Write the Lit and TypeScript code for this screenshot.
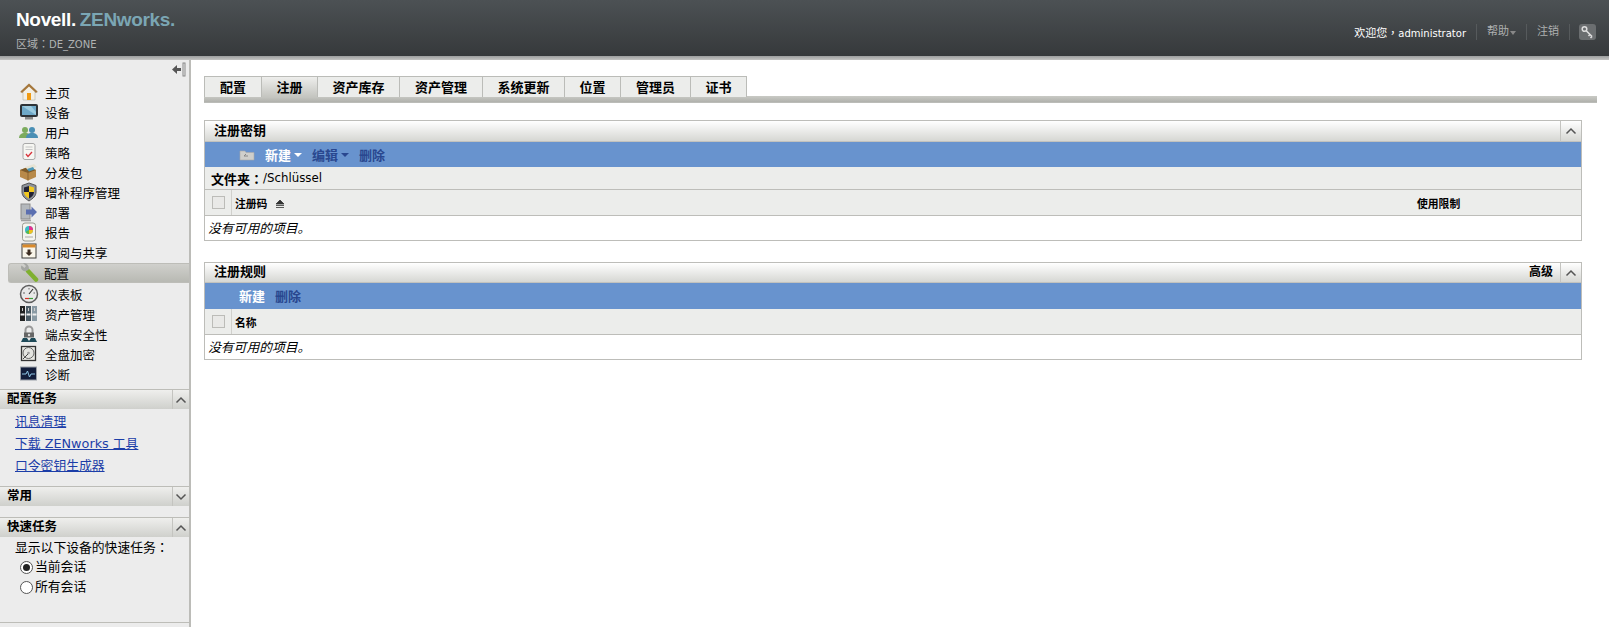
import { LitElement, html, css, svg } from "lit";
import { customElement } from "lit/decorators.js";

const icons: Record<string, unknown> = {
  home: svg`<path d="M10 2 1.500 10h2.500v8h12v-8h2.500z" fill="#f3efe4" stroke="#b7b3a6" stroke-width=".6"/><path d="M10 1.500 1.500 9.500 3 11l7-6.500 7 6.500 1.500-1.500z" fill="#a5763b"/><rect x="8" y="11" width="4" height="7" fill="#f09a12"/>`,
  device: svg`<rect x="1" y="2" width="18" height="13" rx="2" fill="#2e3338"/><rect x="3" y="4" width="14" height="9" fill="#6fa9c9"/><path d="M3 4h9l5 6v3z" fill="#9ccbe0"/><rect x="6" y="15" width="8" height="2.500" fill="#8a8a8a"/>`,
  user: svg`<circle cx="6" cy="8" r="3" fill="#7cab5d"/><path d="M0 16c0-3 2-5 6-5s6 2 6 5z" fill="#7cab5d"/><circle cx="13" cy="8" r="3" fill="#4a8fb5"/><path d="M7 16c0-3 2-5 6-5s6 2 6 5z" fill="#4a8fb5"/>`,
  policy: svg`<rect x="4" y="1.500" width="12" height="16" rx="2" fill="#f6f6f2" stroke="#a8a8a8"/><path d="M6.500 5h7M6.500 7.500h7" stroke="#c4c4c4"/><path d="m7 12 2 2.500 4-4.500" fill="none" stroke="#d8323c" stroke-width="1.300"/>`,
  bundle: svg`<path d="M1 8 9 5l8 3v7l-8 3.500L1 15z" fill="#b88a4a"/><path d="M1 8l8 3 8-3-8-3z" fill="#7c5a2a"/><path d="M6 5l9-3 3 3-9 3z" fill="#e7e3d3"/><path d="M8 7l6-2 1.500 2.500-5.500 2z" fill="#4b97b7"/><path d="M9 11v7.500" stroke="#8a6430"/>`,
  patch: svg`<path d="M10 1 17 3.500v6.500c0 4-3 6.500-7 9-4-2.500-7-5-7-9V3.500z" fill="#8d9299" stroke="#555"/><path d="M10 4v6H5V5.500z" fill="#223"/><path d="M10 4l5 1.500V10h-5z" fill="#f2c81f"/><path d="M10 10h5c0 3-2 5-5 6.500z" fill="#223"/><path d="M10 10v6.500c-3-1.500-5-3.500-5-6.500z" fill="#f2c81f"/>`,
  deploy: svg`<rect x="2" y="2" width="9" height="15" fill="#b4b8bc" stroke="#8c8c8c"/><path d="M2 18.500h10" stroke="#a0a0a0" stroke-width="1.500"/><path d="M7 7.500h5.500V4.500L18 10l-5.500 5.500V12.500H7z" fill="#5b6fb0"/>`,
  report: svg`<rect x="3.500" y="1" width="13" height="18" rx="2.500" fill="#f4f4ee" stroke="#9a9a90"/><circle cx="10" cy="8" r="4" fill="#3cb8c8"/><path d="M10 8V4a4 4 0 0 1 4 4z" fill="#e8308c"/><path d="M10 8h4a4 4 0 0 1-4 4z" fill="#f0c020"/><path d="M10 8v4a4 4 0 0 1-3.500-2z" fill="#5aba4a"/><path d="M6 15h8" stroke="#aaa"/>`,
  sub: svg`<rect x="3" y="2" width="14" height="14" fill="#faf6ea" stroke="#3c3c38"/><rect x="3.500" y="2.500" width="13" height="3" fill="#d98a2b"/><path d="M8.500 7.500h3v3h2L10 14l-3.500-3.500h2z" fill="#3c2c20"/>`,
  dash: svg`<circle cx="10" cy="10" r="8.500" fill="#e8e8e8" stroke="#5d5d5d" stroke-width="1.500"/><path d="m10 10 4-5" stroke="#333" stroke-width="1.200"/><path d="M6 14.500h4" stroke="#d8332c" stroke-width="1.200"/><path d="M10 14.500h4" stroke="#3ca03c" stroke-width="1.200"/><path d="M4 9h2M10 4v1.500M14.500 9h1.500" stroke="#666"/>`,
  asset: svg`<rect x="1" y="2" width="5" height="15" fill="#222"/><rect x="7" y="2" width="5" height="15" fill="#4c5c66"/><rect x="13" y="2" width="5" height="15" fill="#8a9aa4"/><path d="M1.500 10.500h4M7.500 10.500h4M13.500 10.500h4" stroke="#eee" stroke-width="2"/><path d="M3.500 4v3M9.500 4v3M15.500 4v3" stroke="#ccc"/>`,
  end: svg`<path d="M6.500 9V6a3.500 3.500 0 0 1 7 0v3" fill="none" stroke="#999" stroke-width="2"/><rect x="5" y="8.500" width="10" height="5" fill="#666"/><path d="M2 18l2-4h4l2 3 2-3h4l2 4z" fill="#1e4a58"/><circle cx="10" cy="11" r="1.200" fill="#ddd"/>`,
  disk: svg`<rect x="2.500" y="2.500" width="14" height="14" fill="#e9e9e4" stroke="#333" stroke-width="1.300"/><circle cx="9.500" cy="9" r="5.500" fill="#e4e4e0" stroke="#666"/><circle cx="9.500" cy="9" r="1.300" fill="#999"/><path d="m4 15 5-5" stroke="#444"/>`,
  diag: svg`<rect x="1.500" y="3" width="16" height="13" fill="#121d3b" stroke="#9a9fa8"/><path d="M3 10h4l1.500-3 2 6 1.500-3h4" fill="none" stroke="#8fc7e8"/>`,
  wrench: svg`<path d="m9 8 8 8.500" stroke="#7fb02f" stroke-width="4.500" stroke-linecap="round"/><path d="M4 0 7 3 5.500 5 2.500 2.500C1 5 3 9 7 8l2.500-1C11 3.500 8 -.5 4 0z" fill="#a4a6a2"/>`,
};

const nav: [string, string][] = [
  ["home", "主页"], ["device", "设备"], ["user", "用户"], ["policy", "策略"], ["bundle", "分发包"],
  ["patch", "增补程序管理"], ["deploy", "部署"], ["report", "报告"], ["sub", "订阅与共享"], ["wrench", "配置"],
  ["dash", "仪表板"], ["asset", "资产管理"], ["end", "端点安全性"], ["disk", "全盘加密"], ["diag", "诊断"],
];
const tabs: [string, number][] = [
  ["配置", 57], ["注册", 56], ["资产库存", 82], ["资产管理", 83], ["系统更新", 82],
  ["位置", 56], ["管理员", 70], ["证书", 57],
];

const chevron = (up: boolean) => html`<svg class="chev" width="12" height="8" viewBox="0 0 12 8"><path d=${up ? "M1.500 6.500 6 2l4.500 4.500" : "M1.500 1.500 6 6l4.500-4.500"} fill="none" stroke="#555" stroke-width="1.500"/></svg>`;

@customElement("app-root")
export class AppRoot extends LitElement {
  static styles = css`
    :host { display: flex; flex-direction: column; height: 100vh; overflow: hidden; background: #fff; color: #000;
      font: 13px "DejaVu Sans", "Noto Sans CJK SC", sans-serif; }
    * { box-sizing: border-box; }
    .p { font-family: "Noto Sans CJK TC", sans-serif; }
    .top { flex: none; height: 56px; background: linear-gradient(#4c5154, #36393b); display: flex; justify-content: space-between; align-items: flex-start; }
    .brand { padding: 8px 0 0 16px; }
    .logo { font: bold 19px/23px "Liberation Sans", sans-serif; color: #fff; display: flex; gap: 4px; letter-spacing: -.35px; white-space: nowrap; }
    .logo i { font-style: normal; color: #7ba6b4; }
    .zone { margin-top: 5px; font-size: 11px; line-height: 14px; color: #b0b3b3; }
    .zone small { font-size: 10px; }
    .util { display: flex; align-items: center; padding: 24px 13px 0 0; font-size: 11px; color: #aeb1b1; }
    .util > span { height: 16px; line-height: 16px; white-space: nowrap; }
    .util .hello { color: #fff; padding-right: 10px; }
    .util .hello small { font-size: 10px; }
    .util .link { border-left: 1px solid #565a5c; padding: 0 10px; display: flex; align-items: center; gap: 1px; }
    .util .tri { width: 0; height: 0; border: 3px solid transparent; border-top: 4px solid #888; border-bottom: 0; margin-top: 2px; }
    .util .sep { border-left: 1px solid #565a5c; padding-left: 9px; }
    .key { display: block; width: 17px; height: 16px; }
    .strip { flex: none; height: 4px; background: linear-gradient(#9c9e9e, #c4c4c2); }
    .main { flex: 1; display: flex; min-height: 0; }
    aside { flex: none; width: 191px; background: #ececec; border-right: 2px solid #bcbcb8; display: flex; flex-direction: column; }
    .collapse { height: 22px; display: flex; justify-content: flex-end; padding: 2px 3px 0 0; }
    .nav { display: flex; flex-direction: column; padding-left: 8px; }
    .item { height: 20px; display: flex; align-items: center; padding-left: 11px; gap: 6px; font-size: 12.500px; white-space: nowrap; }
    .item svg { flex: none; }
    .item.sel { margin-top: 1px; margin-bottom: 1px; border-radius: 3px 0 0 3px; border: 1px solid #bdbdb8; border-right: 0; background: linear-gradient(#d0d0cc, #b8b9b3); padding-left: 10px; gap: 5px; }
    .sech { flex: none; height: 20px; border-top: 1px solid #bdbdb8; background: linear-gradient(#efefed, #cfd0cc); display: flex; justify-content: space-between; font-weight: bold; font-size: 12.500px; line-height: 18px; padding-left: 7px; }
    .sech b { flex: none; width: 17px; border-left: 1px solid #c4c4c0; display: flex; align-items: center; justify-content: center; }
    .first { margin-top: 5px; }
    .links { display: flex; flex-direction: column; gap: 4px; padding: 4px 0 0 15px; height: 77px; }
    .links a { color: #1c3ea8; text-decoration: underline; line-height: 18px; font-size: 12.800px; }
    .common { margin-bottom: 11px; }
    .quick { padding: 0 0 0 15px; font-size: 12.800px; line-height: 20px; display: flex; flex-direction: column; }
    .radios { margin-top: -1px; }
    .radio { display: flex; align-items: center; gap: 2px; padding-left: 5px; }
    .radio span { width: 13px; height: 13px; border-radius: 50%; border: 1px solid #555; background: #fff; display: flex; align-items: center; justify-content: center; }
    .radio span.on::after { content: ""; width: 7px; height: 7px; border-radius: 50%; background: #222; }
    .foot { margin-top: auto; height: 5px; border-top: 1px solid #bdbdb8; }
    .content { flex: 1; min-width: 0; padding: 16px 27px 0 13px; }
    .tabs { display: flex; height: 20px; border-top: 1px solid #bbbcb8; width: max-content; }
    .tab { height: 20px; border-left: 1px solid #bbbcb8; background: #ecedeb; display: flex; align-items: center; justify-content: center; font-weight: 700; font-size: 13px; padding-bottom: 1px; }
    .tab:last-child { border-right: 1px solid #bbbcb8; }
    .tab.on { background: linear-gradient(#eeeeec, #c4c5c0); }
    .band { height: 7px; margin-right: -15px; background: linear-gradient(#c9cac5, #b0b1ac); border-bottom: 1px solid #bbbcb8; }
    .panel { border: 1px solid #bdbdb9; margin-top: 17px; }
    .panel + .panel { margin-top: 21px; }
    .panel + .panel .phead { height: 20px; padding-bottom: 5px; }
    .panel + .panel .phead b { margin-bottom: -5px; height: 20px; }
    .panel + .panel .bar { height: 26px; padding-bottom: 2px; }
    .phead { height: 21px; background: linear-gradient(#fff, #d6d7d3); border-bottom: 1px solid #c2c2be; display: flex; align-items: center; font-weight: 700; padding-left: 9px; padding-bottom: 4px; }
    .phead .ttl { flex: 1; }
    .phead .adv { padding-right: 7px; font-size: 12px; }
    .phead b { width: 21px; height: 21px; margin-bottom: -4px; border-left: 1px solid #c4c4c0; display: flex; align-items: center; justify-content: center; }
    .bar { height: 25px; background: #6893ce; display: flex; align-items: center; font-weight: 700; color: #29478f; padding-left: 34px; white-space: nowrap; }
    .bar .w { color: #fff; }
    .bar span { display: flex; align-items: center; gap: 3px; margin-right: 10px; }
    .bar .tri { width: 0; height: 0; border: 4px solid transparent; border-top: 4px solid currentColor; border-bottom: 0; }
    .folder { display: block; margin-right: 10px; }
    .crumb { height: 23px; background: #ecedeb; display: flex; align-items: center; padding-left: 6px; border-bottom: 1px solid #bdbdb9; font-size: 11.800px; }
    .crumb strong { font-weight: 700; font-size: 13px; }
    .thead { height: 26px; background: #ecedeb; border-bottom: 1px solid #bdbdb9; display: flex; font-weight: bold; font-size: 10.800px; align-items: stretch; }
    .cbx { flex: none; width: 27px; border-right: 1px solid #d0d0cc; display: flex; align-items: center; justify-content: center; }
    .cbx i { display: block; width: 13px; height: 13px; border: 1px solid #bcbcb8; background: #e9e9e7; }
    .col { display: flex; align-items: center; padding-left: 3px; flex: 1; gap: 8px; }
    .sort { margin-top: 3px; }
    .use { flex: none; width: 164px; display: flex; align-items: center; }
    .empty { height: 24px; background: #fff; font-style: italic; font-size: 12.800px; display: flex; align-items: center; padding: 0 0 2px 3px; }
  `;

  render() {
    return html`
      <header class="top">
        <div class="brand">
          <div class="logo"><span>Novell.</span><i>ZENworks.</i></div>
          <div class="zone">区域<span class="p">：</span><small>DE_ZONE</small></div>
        </div>
        <div class="util">
          <span class="hello">欢迎您<span class="p">，</span><small>administrator</small></span>
          <span class="link">帮助<span class="tri"></span></span>
          <span class="link">注销</span>
          <span class="sep"><svg class="key" viewBox="0 0 17 16"><rect width="17" height="16" rx="3" fill="#6b6e70"/><path d="m7 6.500 6 6M11 10.500l-1.500 1.500M13 12.500l-1.500 1.500" stroke="#ddd" stroke-width="1.600"/><circle cx="5.500" cy="5" r="2.300" fill="none" stroke="#ddd" stroke-width="1.500"/></svg></span>
        </div>
      </header>
      <div class="strip"></div>
      <div class="main">
        <aside>
          <div class="collapse"><svg width="15" height="15" viewBox="0 0 15 15"><path d="M1 7.500 6 3v3h4v3H6v3z" fill="#555"/><rect x="12" y="1" width="2" height="13" fill="none" stroke="#888"/></svg></div>
          <nav class="nav">
            ${nav.map(([ic, label]) => html`<div class="item ${ic === "wrench" ? "sel" : ""}"><svg width="20" height="20" viewBox="0 0 20 20">${icons[ic]}</svg>${label}</div>`)}
          </nav>
          <div class="sech first"><span>配置任务</span><b>${chevron(true)}</b></div>
          <div class="links"><a>讯息清理</a><a>下载 ZENworks 工具</a><a>口令密钥生成器</a></div>
          <div class="sech common"><span>常用</span><b>${chevron(false)}</b></div>
          <div class="sech"><span>快速任务</span><b>${chevron(true)}</b></div>
          <div class="quick">
            <div>显示以下设备的快速任务<span class="p">：</span></div>
            <div class="radios">
              <div class="radio"><span class="on"></span>当前会话</div>
              <div class="radio"><span></span>所有会话</div>
            </div>
          </div>
          <div class="foot"></div>
        </aside>
        <section class="content">
          <div class="tabs">
            ${tabs.map(([t, w], i) => html`<div class="tab ${i === 1 ? "on" : ""}" style="width:${w}px">${t}</div>`)}
          </div>
          <div class="band"></div>
          <div class="panel">
            <div class="phead"><span class="ttl">注册密钥</span><b>${chevron(true)}</b></div>
            <div class="bar">
              <svg class="folder" width="16" height="12" viewBox="0 0 16 12"><path d="M1 2h5l1 1.500h8V11H1z" fill="#cfcfcb" stroke="#aaa" stroke-width=".6"/><path d="M5 7h4M5 7l2-2" stroke="#888" fill="none"/></svg>
              <span class="w">新建<i class="tri"></i></span>
              <span>编辑<i class="tri"></i></span>
              <span>删除</span>
            </div>
            <div class="crumb"><strong>文件夹<span class="p">：</span></strong>/Schlüssel</div>
            <div class="thead"><div class="cbx"><i></i></div><div class="col">注册码<svg class="sort" width="10" height="9" viewBox="0 0 10 9"><path d="M5 0 9 4H1zM1 5.500h8M1 7.500h8" fill="#333" stroke="#333" stroke-width=".8"/></svg></div><div class="use">使用限制</div></div>
            <div class="empty">没有可用的项目。</div>
          </div>
          <div class="panel">
            <div class="phead"><span class="ttl">注册规则</span><span class="adv">高级</span><b>${chevron(true)}</b></div>
            <div class="bar"><span class="w">新建</span><span>删除</span></div>
            <div class="thead"><div class="cbx"><i></i></div><div class="col">名称</div></div>
            <div class="empty">没有可用的项目。</div>
          </div>
        </section>
      </div>
    `;
  }
}
